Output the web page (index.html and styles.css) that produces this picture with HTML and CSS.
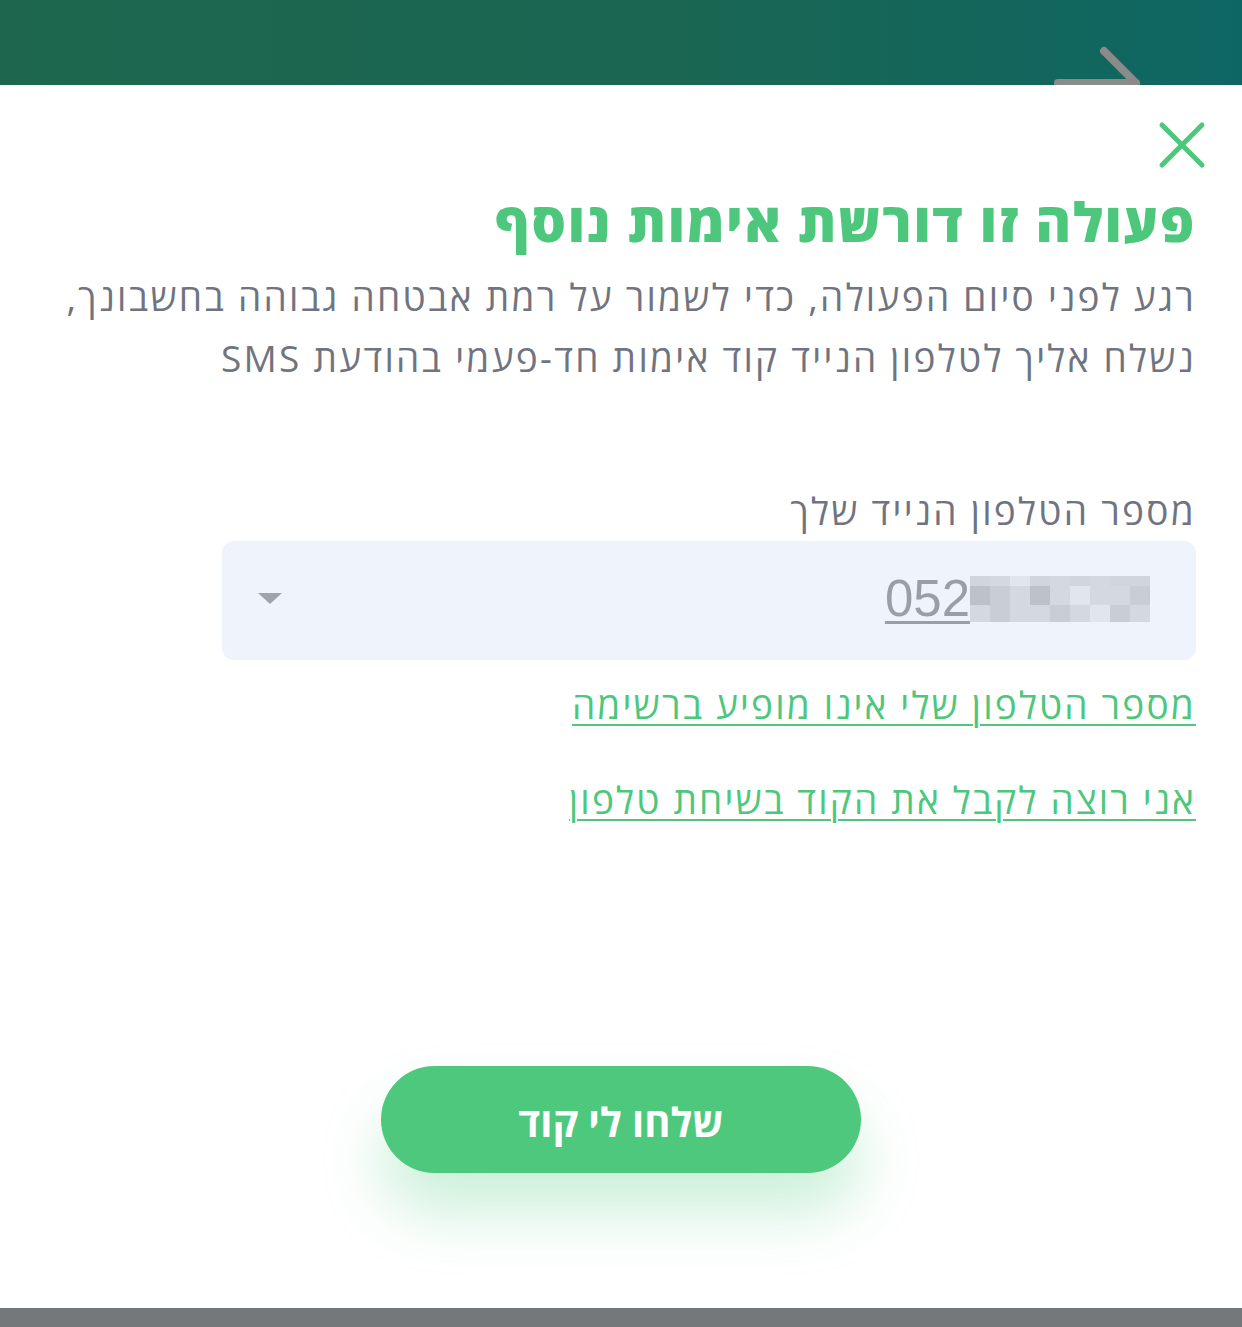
FILE: index.html
```html
<!DOCTYPE html>
<html lang="he" dir="rtl">
<head>
<meta charset="utf-8">
<link rel="stylesheet" href="styles.css">
</head>
<body>
<div class="page">
  <header class="topbar">
    <svg class="back" width="100" height="60" viewBox="0 0 100 60">
      <path d="M8 38 H86 M54 6 L86 38 L54 70" fill="none" stroke="#8b8b8b" stroke-width="8" stroke-linecap="round" stroke-linejoin="round"/>
    </svg>
  </header>
  <main class="modal">
    <div class="close-row">
      <svg class="close" width="48" height="48" viewBox="0 0 48 48">
        <path d="M4 4 L44 44 M44 4 L4 44" stroke="#4cc87c" stroke-width="5" stroke-linecap="round"/>
      </svg>
    </div>
    <h1 class="title">פעולה זו דורשת אימות נוסף</h1>
    <p class="desc">רגע לפני סיום הפעולה, כדי לשמור על רמת אבטחה גבוהה בחשבונך,<br>נשלח אליך לטלפון הנייד קוד אימות חד-פעמי בהודעת SMS</p>
    <label class="label">מספר הטלפון הנייד שלך</label>
    <div class="select">
      <div class="phone">
        <span class="prefix">052</span>
        <span class="pix">
          <i class="a"></i><i class="b"></i><i class="c"></i><i class="a"></i><i class="b"></i><i class="a"></i><i class="b"></i><i class="a"></i><i class="a"></i>
          <i class="d"></i><i class="f"></i><i class="b"></i><i class="d"></i><i class="b"></i><i class="c"></i><i class="b"></i><i class="b"></i><i class="f"></i>
          <i class="b"></i><i class="f"></i><i class="b"></i><i class="b"></i><i class="f"></i><i class="b"></i><i class="c"></i><i class="f"></i><i class="b"></i>
        </span>
      </div>
      <span class="caret"></span>
    </div>
    <a class="link link1" href="#">מספר הטלפון שלי אינו מופיע ברשימה</a>
    <a class="link link2" href="#">אני רוצה לקבל את הקוד בשיחת טלפון</a>
    <div class="actions">
      <button class="send">שלחו לי קוד</button>
    </div>
  </main>
  <footer class="bottombar"></footer>
</div>
</body>
</html>
```
FILE: styles.css
```css
* { box-sizing: border-box; }
html, body { margin: 0; padding: 0; }
body {
  width: 1242px;
  height: 1327px;
  overflow: hidden;
  background: #fff;
  font-family: "Open Sans", "DejaVu Sans", sans-serif;
}
.page {
  display: flex;
  flex-direction: column;
  height: 1327px;
}
.topbar {
  height: 85px;
  flex: none;
  background: linear-gradient(90deg, #1e664e 0%, #1a6653 55%, #0e6663 100%);
  overflow: hidden;
  display: flex;
  justify-content: flex-start;
  align-items: flex-end;
  padding-right: 92px;
}
.back {
  margin-bottom: -20px;
  direction: ltr;
}
.modal {
  flex: 1;
  background: #fff;
  display: flex;
  flex-direction: column;
  align-items: flex-start;
  padding: 36px 46px 0 46px;
}
.close-row {
  align-self: stretch;
  display: flex;
  justify-content: flex-start;
  margin-right: -10px;
}
.title {
  margin: 18px 0 0;
  font-size: 54px;
  font-weight: 800;
  line-height: 68px;
  letter-spacing: 1.7px;
  color: #4cc77b;
}
.desc {
  margin: 11px 0 0;
  font-size: 37px;
  line-height: 61px;
  letter-spacing: 2.3px;
  color: #6f7480;
  font-weight: 400;
}
.label {
  margin-top: 98px;
  font-size: 37px;
  line-height: 50px;
  letter-spacing: 2.3px;
  color: #6f7480;
}
.select {
  margin-top: 5px;
  width: 974px;
  height: 119px;
  background: #eff4fc;
  border-radius: 12px;
  display: flex;
  align-items: center;
  justify-content: space-between;
  padding: 0 46px 4px 36px;
}
.phone {
  display: flex;
  align-items: center;
  direction: ltr;
}
.prefix {
  font-family: "Liberation Sans", Arial, sans-serif;
  font-size: 51px;
  color: #9a9ea6;
  text-decoration: underline;
  text-decoration-thickness: 3px;
  text-underline-offset: 5px;
  line-height: 52px;
}
.pix {
  display: grid;
  grid-template-columns: repeat(9, 20px);
  grid-template-rows: 10px 19px 17px;
}
.pix i { display: block; }
.pix .a { background: #d1d6de; }
.pix .b { background: #d4d8e0; }
.pix .c { background: #e1e5ec; }
.pix .d { background: #bcc1ca; }
.pix .e { background: #dbdfe6; }
.pix .f { background: #c9ced6; }
.caret {
  width: 0;
  height: 0;
  border-left: 12px solid transparent;
  border-right: 12px solid transparent;
  border-top: 11px solid #a0a3a9;
}
.link {
  color: #4cc77b;
  font-size: 37px;
  line-height: 50px;
  letter-spacing: 2.2px;
  text-decoration: underline;
  text-decoration-thickness: 2px;
  text-underline-offset: 5px;
}
.link1 { margin-top: 20px; }
.link2 { margin-top: 45px; }
.actions {
  align-self: stretch;
  display: flex;
  justify-content: center;
  margin-top: 241px;
}
.send {
  width: 480px;
  height: 107px;
  border: none;
  border-radius: 54px;
  background: #4dc87d;
  color: #fff;
  font-family: "Open Sans", "DejaVu Sans", sans-serif;
  font-size: 40px;
  font-weight: 700;
  padding-top: 4px;
  box-shadow: 0 40px 60px rgba(77, 200, 125, 0.28);
}
.bottombar {
  height: 19px;
  flex: none;
  background: #75787a;
}
```
